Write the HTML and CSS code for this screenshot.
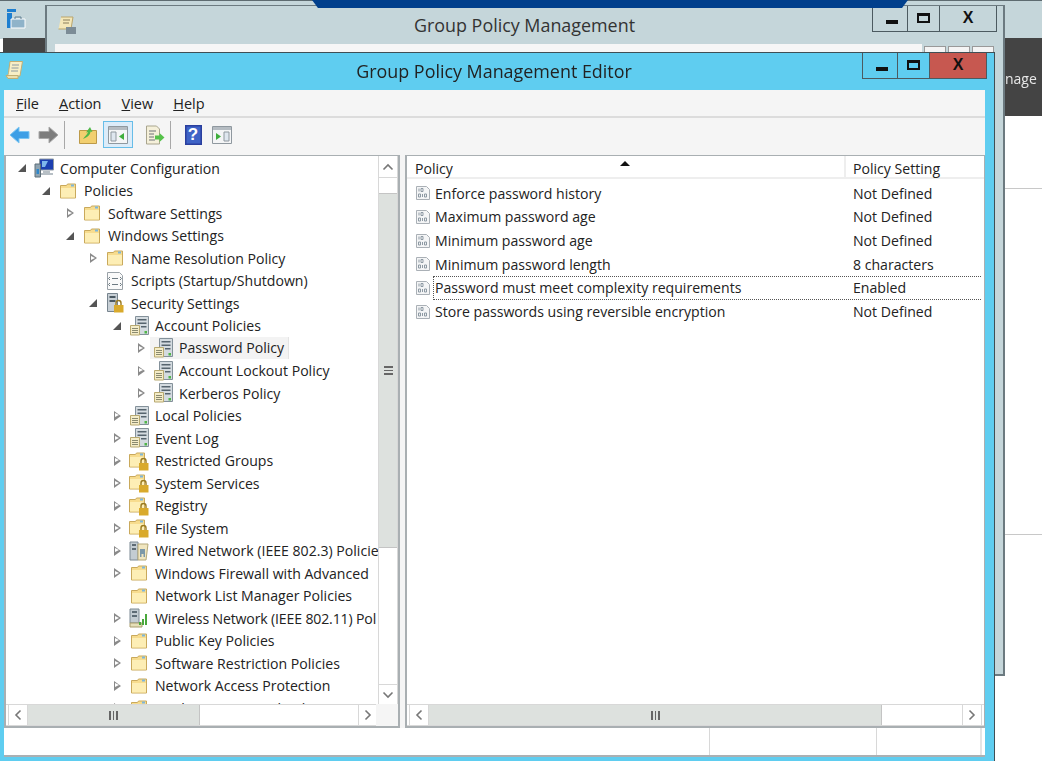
FILE: index.html

```html
<!DOCTYPE html>
<html lang="en">
<head>
    <meta charset="UTF-8">
    <title>Group Policy Management Editor</title>
    <link rel="stylesheet" href="styles.css">
</head>
<body>

<svg class="defs" width="0" height="0">
    <defs>
        <symbol id="i-folder" viewBox="0 0 20 20">
            <path d="M2.500 4.500h6l1-1.500h8v14h-15z" fill="#f7dc8e" stroke="#c9a95c"/>
            <path d="M3 7h14v9.500H3z" fill="#fdeeb5"/>
            <path d="M13 3.500h3v2h-3z" fill="#7cb6dc"/>
        </symbol>
        <symbol id="i-lockfolder" viewBox="0 0 20 20">
            <path d="M.5 3.500h6l1-1.500h8v14H.5z" fill="#f7dc8e" stroke="#c9a95c"/>
            <path d="M1 6h14v9.500H1z" fill="#fdeeb5"/>
            <path d="M11 2.500h3v2h-3z" fill="#7cb6dc"/>
            <path d="M12 12v-2a2.500 2.500 0 0 1 5 0v2" fill="none" stroke="#9a7a20" stroke-width="1.400"/>
            <path d="M10 12h9.500v7.500H10z" fill="#d9aa2c"/>
        </symbol>
        <symbol id="i-policy" viewBox="0 0 20 20">
            <path d="M6.500.5h13v18h-13z" fill="#d4dbe0" stroke="#84919a"/>
            <path d="M8.500 3h9v1.500h-9zM8.500 6.500h9V8h-9zM12 10h5.500v1.500H12z" fill="#56646e"/>
            <path d="M15.500 15h2.500v2.500h-2.500z" fill="#4fb548"/>
            <path d="M1.500 9.500h9v9.500h-9z" fill="#f4ecc7" stroke="#b8a970"/>
            <path d="M3 12.500h6M3 14.500h6M3 16.500h6" stroke="#8a8a70"/>
        </symbol>
        <symbol id="i-seclock" viewBox="0 0 20 20">
            <path d="M2.500.5h10v18h-10z" fill="#c8d0d6" stroke="#77848e"/>
            <path d="M4.500 3h6v2h-6zM4.500 7h6v2h-6z" fill="#4a5862"/>
            <path d="M11 12v-2a2.500 2.500 0 0 1 5 0v2" fill="none" stroke="#9a7a20" stroke-width="1.400"/>
            <path d="M9 12h9.500v7.500H9z" fill="#d9aa2c"/>
        </symbol>
        <symbol id="i-script" viewBox="0 0 20 20">
            <path d="M2.500 1.500h12l3 3v14h-15z" fill="#fafafa" stroke="#9aa2a8"/>
            <path d="M5 6L3.500 7.500 5 9M15 6l1.500 1.500L15 9M5 12l-1.500 1.500L5 15M15 12l1.500 1.500L15 15M7 7.500h6M7 13.500h6" fill="none" stroke="#6d7a82"/>
        </symbol>
        <symbol id="i-computer" viewBox="0 0 20 20">
            <path d="M5.500 1h14v11h-14z" fill="#1c3fb0" stroke="#8f9aa3"/>
            <path d="M8 3h6l-3 6H8z" fill="#7eb6ec"/>
            <path d="M9 13h7v2h3v2H7v-2h2z" fill="#b7bfc5"/>
            <path d="M1 6h5.500v13H1z" fill="#8fa3b0" stroke="#5f6e78"/>
            <path d="M2.500 11h2.500v5H2.500z" fill="#2e86c9"/>
        </symbol>
        <symbol id="i-wired" viewBox="0 0 20 20">
            <path d="M1 1h8v18H1z" fill="#c3ccd2" stroke="#7c8a94"/>
            <path d="M3 3h4v2H3zM3 7h4v2H3z" fill="#5d6b75"/>
            <path d="M9 3h10l-2 16H9z" fill="#f0e6c0" stroke="#b5a878"/>
            <path d="M11 8h5v8h-1.500v-3h-2v3H11z" fill="#7c98a8"/>
        </symbol>
        <symbol id="i-wireless" viewBox="0 0 20 20">
            <path d="M1 1h9v14H1z" fill="#c3ccd2" stroke="#7c8a94"/>
            <path d="M3 3h5v2H3zM3 7h5v2H3z" fill="#5d6b75"/>
            <path d="M1 15h12v4H1z" fill="#e6dfb8" stroke="#a89c6c"/>
            <path d="M10 17v-3h2v3zM13 17v-6h2v6zM16 17V6h2v11z" fill="#4aa83c"/>
        </symbol>
        <symbol id="i-setting" viewBox="0 0 16 16">
            <path d="M1.500 1.500h10l3 3v10h-13z" fill="#f4f5f6" stroke="#aab0b6"/>
            <path d="M4 3.500v3M6 3.500h2v3H6zM3.500 9h2v3h-2zM7.500 9v3M9.500 9h2v3h-2z" fill="none" stroke="#8d99a3"/>
        </symbol>
    </defs>
</svg>

<!-- windows behind the editor -->
<div class="server-manager">
    <div class="sm-dark"></div>
    <div class="sm-band"><span class="sm-text">nage</span></div>
    <div class="sm-line sm-line-1"></div>
    <div class="sm-line sm-line-2"></div>
    <svg class="sm-icon" width="20" height="22" viewBox="0 0 20 22">
        <path d="M1 1h9v3H1z" fill="#1e7fd0"/>
        <path d="M1 5h5v15H1z" fill="#1e7fd0"/>
        <path d="M5 11h14v9H5z" fill="#8fb3c9" stroke="#fff"/>
        <path d="M9 11V9h6v2" fill="none" stroke="#5f7f92"/>
    </svg>
    <div class="top-strip"></div>
</div>

<div class="gpm-window">
    <svg class="gpm-icon" width="20" height="20" viewBox="0 0 20 20">
        <path d="M4 2h12l-2 12H1.500" fill="#f4e7b8" stroke="#b9a56c"/>
        <path d="M6 5h7M6 8h6" stroke="#8a7f5c"/>
        <path d="M9 12h10v7H9z" fill="#7c8c96"/>
    </svg>
    <div class="gpm-title">Group Policy Management</div>
    <div class="caption-buttons gpm-buttons">
        <div class="cap-btn cap-min"><span class="glyph-min"></span></div>
        <div class="cap-btn cap-max"><span class="glyph-max"></span></div>
        <div class="cap-btn cap-close"><span class="glyph-x">X</span></div>
    </div>
    <div class="gpm-child">
        <div class="gpm-child-btns"><span></span><span></span><span></span></div>
    </div>
</div>

<!-- front window -->
<div class="editor">
    <div class="titlebar">
        <svg class="title-icon" width="20" height="20" viewBox="0 0 20 20">
            <path d="M5 1.500h12.500l-2.500 14.500H1.500c1.500-1 2-2 2-3.500z" fill="#f7eec6" stroke="#c2ae72"/>
            <path d="M7 5h7M6.500 8h7M6 11h7" stroke="#8e9aa0"/>
            <path d="M1 15.500h12v3H3z" fill="#eadfae" stroke="#c2ae72"/>
        </svg>
        <div class="title-text">Group Policy Management Editor</div>
        <div class="caption-buttons">
            <div class="cap-btn cap-min"><span class="glyph-min"></span></div>
            <div class="cap-btn cap-max"><span class="glyph-max"></span></div>
            <div class="cap-btn cap-close active"><span class="glyph-x">X</span></div>
        </div>
    </div>

    <div class="client">
        <div class="menubar">
            <span class="menu-item"><u>F</u>ile</span>
            <span class="menu-item"><u>A</u>ction</span>
            <span class="menu-item"><u>V</u>iew</span>
            <span class="menu-item"><u>H</u>elp</span>
        </div>

        <div class="toolbar">
            <button class="tool">
                <svg width="22" height="20" viewBox="0 0 22 20"><path d="M1 10l9-8v4.500h10v7H10V18z" fill="#3d9fe6" stroke="#7cc6f2"/></svg>
            </button>
            <button class="tool">
                <svg width="22" height="20" viewBox="0 0 22 20"><path d="M21 10l-9-8v4.500H2v7h10V18z" fill="#7d7d7d" stroke="#a8a8a8"/></svg>
            </button>
            <span class="tool-sep"></span>
            <button class="tool tool-wide">
                <svg width="20" height="20" viewBox="0 0 20 20">
                    <path d="M1.500 5.500h17v13h-17z" fill="#f2cf70" stroke="#bd9a48"/>
                    <path d="M5 14c2-3 4-4 5-7l-2 .5L12 2l2.500 5-2-.5c0 3-3 6-7.500 7.500z" fill="#4fb848"/>
                </svg>
            </button>
            <button class="tool tool-on">
                <svg width="20" height="18" viewBox="0 0 20 18">
                    <path d="M.5.5h19v17H.5z" fill="#f4f5f6" stroke="#8f989f"/>
                    <path d="M1 1h18v3H1z" fill="#b5bcc2"/>
                    <path d="M3 6h5v9H3z" fill="#dfe7ef" stroke="#8f989f"/>
                    <path d="M16 7v7l-5-3.500z" fill="#3fae3c"/>
                </svg>
            </button>
            <button class="tool tool-wide2">
                <svg width="20" height="20" viewBox="0 0 20 20">
                    <path d="M1.500 1h10l3 3v15h-13z" fill="#f5f0da" stroke="#a9a58e"/>
                    <path d="M4 6h7M4 9h5M4 12h5M4 15h6" stroke="#6f7378"/>
                    <path d="M19.500 12.500l-5-4.500v2.500H10v4h4.500V17z" fill="#56c24a"/>
                </svg>
            </button>
            <span class="tool-sep sep-b"></span>
            <button class="tool tool-help">
                <svg class="help-svg" width="17" height="20" viewBox="0 0 17 20">
                    <path d="M0 0h17v20H0z" fill="#2a3f9e"/>
                    <path d="M1.500 1.500h14v17h-14z" fill="#3e63c6"/>
                </svg>
                <span class="help-mark">?</span>
            </button>
            <button class="tool tool-last">
                <svg width="20" height="18" viewBox="0 0 20 18">
                    <path d="M.5.5h19v17H.5z" fill="#f4f5f6" stroke="#8f989f"/>
                    <path d="M1 1h18v3H1z" fill="#b5bcc2"/>
                    <path d="M12 6h5v9h-5z" fill="#dfe7ef" stroke="#8f989f"/>
                    <path d="M4 7v7l5-3.500z" fill="#3fae3c"/>
                </svg>
            </button>
        </div>

        <div class="panes">
            <div class="tree-pane">
                <div class="tree-main">
                    <div class="tree">
                        <div class="node lvl-0"><span class="tw open"></span><svg class="ico"><use href="#i-computer"/></svg><span class="label">Computer Configuration</span></div>
                        <div class="node lvl-1"><span class="tw open"></span><svg class="ico"><use href="#i-folder"/></svg><span class="label">Policies</span></div>
                        <div class="node lvl-2"><span class="tw"></span><svg class="ico"><use href="#i-folder"/></svg><span class="label">Software Settings</span></div>
                        <div class="node lvl-2"><span class="tw open"></span><svg class="ico"><use href="#i-folder"/></svg><span class="label">Windows Settings</span></div>
                        <div class="node lvl-3"><span class="tw"></span><svg class="ico"><use href="#i-folder"/></svg><span class="label">Name Resolution Policy</span></div>
                        <div class="node lvl-3"><span class="tw none"></span><svg class="ico"><use href="#i-script"/></svg><span class="label">Scripts (Startup/Shutdown)</span></div>
                        <div class="node lvl-3"><span class="tw open"></span><svg class="ico"><use href="#i-seclock"/></svg><span class="label">Security Settings</span></div>
                        <div class="node lvl-4"><span class="tw open"></span><svg class="ico"><use href="#i-policy"/></svg><span class="label">Account Policies</span></div>
                        <div class="node lvl-5 selected"><span class="tw"></span><svg class="ico"><use href="#i-policy"/></svg><span class="label">Password Policy</span></div>
                        <div class="node lvl-5"><span class="tw"></span><svg class="ico"><use href="#i-policy"/></svg><span class="label">Account Lockout Policy</span></div>
                        <div class="node lvl-5"><span class="tw"></span><svg class="ico"><use href="#i-policy"/></svg><span class="label">Kerberos Policy</span></div>
                        <div class="node lvl-4"><span class="tw"></span><svg class="ico"><use href="#i-policy"/></svg><span class="label">Local Policies</span></div>
                        <div class="node lvl-4"><span class="tw"></span><svg class="ico"><use href="#i-policy"/></svg><span class="label">Event Log</span></div>
                        <div class="node lvl-4"><span class="tw"></span><svg class="ico"><use href="#i-lockfolder"/></svg><span class="label">Restricted Groups</span></div>
                        <div class="node lvl-4"><span class="tw"></span><svg class="ico"><use href="#i-lockfolder"/></svg><span class="label">System Services</span></div>
                        <div class="node lvl-4"><span class="tw"></span><svg class="ico"><use href="#i-lockfolder"/></svg><span class="label">Registry</span></div>
                        <div class="node lvl-4"><span class="tw"></span><svg class="ico"><use href="#i-lockfolder"/></svg><span class="label">File System</span></div>
                        <div class="node lvl-4"><span class="tw"></span><svg class="ico"><use href="#i-wired"/></svg><span class="label">Wired Network (IEEE 802.3) Policie</span></div>
                        <div class="node lvl-4"><span class="tw"></span><svg class="ico"><use href="#i-folder"/></svg><span class="label">Windows Firewall with Advanced</span></div>
                        <div class="node lvl-4"><span class="tw none"></span><svg class="ico"><use href="#i-folder"/></svg><span class="label">Network List Manager Policies</span></div>
                        <div class="node lvl-4"><span class="tw"></span><svg class="ico"><use href="#i-wireless"/></svg><span class="label tight">Wireless Network (IEEE 802.11) Pol</span></div>
                        <div class="node lvl-4"><span class="tw"></span><svg class="ico"><use href="#i-folder"/></svg><span class="label">Public Key Policies</span></div>
                        <div class="node lvl-4"><span class="tw"></span><svg class="ico"><use href="#i-folder"/></svg><span class="label">Software Restriction Policies</span></div>
                        <div class="node lvl-4"><span class="tw"></span><svg class="ico"><use href="#i-folder"/></svg><span class="label">Network Access Protection</span></div>
                        <div class="node lvl-4"><span class="tw"></span><svg class="ico"><use href="#i-folder"/></svg><span class="label">Application Control Policies</span></div>
                    </div>
                    <div class="vscroll">
                        <div class="sb-btn">
                            <svg width="12" height="8" viewBox="0 0 12 8"><path d="M1.500 6.500L6 2l4.500 4.500" fill="none" stroke="#777" stroke-width="1.600"/></svg>
                        </div>
                        <div class="v-gap"></div>
                        <div class="v-thumb"><span class="grip-h"></span></div>
                        <div class="v-rest"></div>
                        <div class="sb-btn">
                            <svg width="12" height="8" viewBox="0 0 12 8"><path d="M1.500 1.500L6 6l4.500-4.500" fill="none" stroke="#777" stroke-width="1.600"/></svg>
                        </div>
                    </div>
                </div>
                <div class="hscroll hscroll-tree">
                    <div class="sb-btn-h">
                        <svg width="8" height="12" viewBox="0 0 8 12"><path d="M6.500 1.500L2 6l4.500 4.500" fill="none" stroke="#777" stroke-width="1.600"/></svg>
                    </div>
                    <div class="h-thumb tree-thumb"><span class="grip-v"></span></div>
                    <div class="h-rest"></div>
                    <div class="sb-btn-h">
                        <svg width="8" height="12" viewBox="0 0 8 12"><path d="M1.500 1.500L6 6l-4.500 4.500" fill="none" stroke="#777" stroke-width="1.600"/></svg>
                    </div>
                    <div class="corner"></div>
                </div>
            </div>

            <div class="list-pane">
                <div class="list-head">
                    <div class="col-policy">Policy<span class="sort-arrow"></span></div>
                    <div class="col-setting">Policy Setting</div>
                </div>
                <div class="list-body">
                    <div class="row"><svg class="row-ico"><use href="#i-setting"/></svg><span class="row-name">Enforce password history</span><span class="row-val">Not Defined</span></div>
                    <div class="row"><svg class="row-ico"><use href="#i-setting"/></svg><span class="row-name">Maximum password age</span><span class="row-val">Not Defined</span></div>
                    <div class="row"><svg class="row-ico"><use href="#i-setting"/></svg><span class="row-name">Minimum password age</span><span class="row-val">Not Defined</span></div>
                    <div class="row"><svg class="row-ico"><use href="#i-setting"/></svg><span class="row-name">Minimum password length</span><span class="row-val">8 characters</span></div>
                    <div class="row focused"><svg class="row-ico"><use href="#i-setting"/></svg><span class="row-name">Password must meet complexity requirements</span><span class="row-val">Enabled</span></div>
                    <div class="row"><svg class="row-ico"><use href="#i-setting"/></svg><span class="row-name">Store passwords using reversible encryption</span><span class="row-val">Not Defined</span></div>
                </div>
                <div class="hscroll hscroll-list">
                    <div class="sb-btn-h">
                        <svg width="8" height="12" viewBox="0 0 8 12"><path d="M6.500 1.500L2 6l4.500 4.500" fill="none" stroke="#777" stroke-width="1.600"/></svg>
                    </div>
                    <div class="h-thumb list-thumb"><span class="grip-v"></span></div>
                    <div class="h-rest"></div>
                    <div class="sb-btn-h">
                        <svg width="8" height="12" viewBox="0 0 8 12"><path d="M1.500 1.500L6 6l-4.500 4.500" fill="none" stroke="#777" stroke-width="1.600"/></svg>
                    </div>
                </div>
            </div>
        </div>

        <div class="statusbar">
            <div class="status-main"></div>
            <div class="status-cell status-a"></div>
            <div class="status-cell status-b"></div>
        </div>
    </div>
</div>

</body>
</html>
```

FILE: styles.css

```css
* {
    box-sizing: border-box;
}
html, body {
    margin: 0;
    height: 100%;
}
body {
    position: relative;
    width: 1042px;
    height: 761px;
    overflow: hidden;
    background-color: #fff;
    font-family: "Open Sans", "Noto Sans", sans-serif;
    font-size: 14px;
    color: #222;
    filter: blur(0.35px);
}
.defs {
    position: absolute;
}

/* desktop behind */
.server-manager {
    position: absolute;
    inset: 0;
}
.server-manager::before {
    content: "";
    position: absolute;
    left: 0;
    top: 0;
    width: 1042px;
    height: 38px;
    background-color: #c5d6da;
    border-top: 1px solid #5e6b70;
}
.sm-dark {
    position: absolute;
    left: 3px;
    top: 38px;
    width: 42px;
    height: 14px;
    background-color: #444;
}
.sm-band {
    position: absolute;
    left: 1004px;
    top: 38px;
    width: 38px;
    height: 78px;
    background-color: #444;
}
.sm-text {
    position: absolute;
    left: 1px;
    top: 31px;
    color: #e8e8e8;
    font-size: 14px;
}
.sm-line {
    position: absolute;
    left: 1004px;
    width: 38px;
    height: 1px;
    background-color: #c8c8c8;
}
.sm-line-1 {
    top: 188px;
}
.sm-line-2 {
    top: 534px;
}
.sm-icon {
    position: absolute;
    left: 6px;
    top: 8px;
}
.top-strip {
    position: absolute;
    z-index: 1;
    left: 312px;
    top: 0;
    width: 596px;
    height: 8px;
    background-color: #003f8c;
    clip-path: polygon(0 0, 100% 0, 99% 100%, 1% 100%);
}

.gpm-window {
    position: absolute;
    left: 45px;
    top: 5px;
    width: 960px;
    height: 671px;
    background-color: #c5d6da;
    border: 1px solid #6c7a80;
    border-width: 1px 2px 2px 2px;
}
.gpm-icon {
    position: absolute;
    left: 10px;
    top: 9px;
}
.gpm-title {
    text-align: center;
    margin-left: -1px;
    padding-top: 7px;
    font-size: 17.900px;
    color: #333;
    line-height: 24px;
}
.gpm-buttons {
    top: 0;
    right: 6px;
}
.gpm-child {
    position: absolute;
    left: 8px;
    top: 38px;
    width: 867px;
    height: 10px;
    background-color: #f6f6f6;
}
.gpm-child-btns {
    position: absolute;
    left: 869px;
    top: 2px;
    display: flex;
    gap: 2px;
}
.gpm-child-btns span {
    width: 22px;
    height: 8px;
    background-color: #f4f4f4;
    border: 1px solid #999;
    border-bottom: none;
}

/* caption buttons shared by both windows */
.caption-buttons {
    position: absolute;
    display: flex;
    height: 26px;
    border: 1px solid #4c5a60;
    border-top: none;
}
.cap-btn {
    display: flex;
    align-items: center;
    justify-content: center;
    height: 100%;
    border-right: 1px solid #4c5a60;
}
.cap-btn:last-child {
    border-right: none;
}
.cap-min {
    width: 35px;
}
.cap-max {
    width: 32px;
}
.cap-close {
    width: 56px;
}
.cap-close.active {
    background-color: #c75850;
}
.glyph-min {
    width: 12px;
    height: 4px;
    margin: 6px 0 0 4px;
    background-color: #111;
}
.glyph-max {
    width: 13px;
    height: 10px;
    border: 2px solid #111;
    border-top-width: 3px;
    margin-bottom: 2px;
}
.glyph-x {
    font-family: "Liberation Sans", sans-serif;
    font-weight: bold;
    font-size: 16px;
    color: #111;
    line-height: 1;
    margin-bottom: 2px;
}

/* editor window */
.editor {
    position: absolute;
    left: 0;
    top: 52px;
    width: 995px;
    height: 709px;
    display: flex;
    flex-direction: column;
    background-color: #5fcdf0;
    border-top: 1px solid #3f4f55;
    border-right: 1px solid #3f4f55;
}
.titlebar {
    position: relative;
    height: 37px;
    flex-shrink: 0;
}
.title-icon {
    position: absolute;
    left: 5px;
    top: 7px;
}
.title-text {
    text-align: center;
    font-size: 17.900px;
    line-height: 24px;
    padding-top: 6px;
    color: #222;
    margin-left: -6px;
}
.titlebar .caption-buttons {
    top: 0;
    right: 7px;
}

.client {
    display: flex;
    flex-direction: column;
    margin: 0 9px 0 4px;
    height: 667px;
    background-color: #f5f5f5;
    border-bottom: 2px solid #aab0b3;
}
.menubar {
    display: flex;
    align-items: center;
    height: 28px;
    padding-left: 12px;
    gap: 20px;
    border-bottom: 2px solid #dcdcdc;
    flex-shrink: 0;
}
.menu-item {
    font-size: 14.500px;
    color: #222;
}
.toolbar {
    display: flex;
    align-items: center;
    height: 37px;
    padding: 0 0 4px 2px;
    flex-shrink: 0;
}
.tool {
    display: flex;
    align-items: center;
    justify-content: center;
    width: 28px;
    height: 27px;
    padding: 0;
    background: none;
    border: 1px solid transparent;
}
.tool-sep {
    width: 1px;
    height: 28px;
    margin: 0 4px 0 2px;
    background-color: #a8a8a8;
}
.tool-on {
    width: 30px;
    background-color: #dcecf9;
    border: 1px solid #67bde8;
}
.tool-wide {
    margin-left: 4px;
    width: 30px;
}
.tool-wide2 {
    margin-left: 8px;
}
.sep-b {
    margin-left: 1px;
}
.tool-help {
    position: relative;
    margin-left: 4px;
}
.tool-last {
    margin-left: 1px;
}
.help-mark {
    position: absolute;
    left: 0;
    right: 0;
    text-align: center;
    font-family: "Liberation Sans", sans-serif;
    font-weight: bold;
    font-size: 17px;
    color: #fff;
}

/* panes */
.panes {
    display: flex;
    flex: 1;
    min-height: 0;
    gap: 5px;
}
.tree-pane, .list-pane {
    display: flex;
    flex-direction: column;
    background-color: #fff;
    border: 1px solid #a9afb2;
    border-bottom-width: 2px;
    border-left-width: 2px;
}
.tree-pane {
    width: 396px;
    border-right-width: 2px;
}
.list-pane {
    flex: 1;
    min-width: 0;
}
.tree-main {
    display: flex;
    flex: 1;
    min-height: 0;
}
.tree {
    flex: 1;
    min-width: 0;
    overflow: hidden;
    padding-top: 1px;
}
.node {
    display: flex;
    align-items: center;
    height: 22.500px;
    white-space: nowrap;
}
.lvl-0 { padding-left: 11px; }
.lvl-1 { padding-left: 35px; }
.lvl-2 { padding-left: 59px; }
.lvl-3 { padding-left: 82px; }
.lvl-4 { padding-left: 106px; }
.lvl-5 { padding-left: 130px; }
.tw {
    width: 17px;
    height: 10px;
    flex-shrink: 0;
    position: relative;
}
.tw::before {
    content: "";
    position: absolute;
    left: 2px;
    top: 0;
    width: 0;
    height: 0;
    border-left: 7px solid #8a8a8a;
    border-top: 5px solid transparent;
    border-bottom: 5px solid transparent;
}
.tw::after {
    content: "";
    position: absolute;
    left: 3px;
    top: 2.500px;
    width: 0;
    height: 0;
    border-left: 4px solid #fff;
    border-top: 2.500px solid transparent;
    border-bottom: 2.500px solid transparent;
}
.tw.open::before {
    left: 1px;
    top: 1px;
    border-left: 8px solid transparent;
    border-top: none;
    border-bottom: 8px solid #555;
}
.tw.open::after {
    display: none;
}
.tw.none::before, .tw.none::after {
    display: none;
}
.ico {
    width: 20px;
    height: 20px;
    flex-shrink: 0;
}
.label {
    margin-left: 6px;
    font-size: 14.100px;
    color: #222;
}
.label.tight {
    letter-spacing: -0.15px;
}
.node.selected .ico {
    box-sizing: content-box;
    padding: 1px 0;
    background-color: #f3f3f3;
    box-shadow: -3px 0 0 #f3f3f3;
}
.node.selected .label {
    margin-left: 0;
    padding: 0 4px 0 6px;
    line-height: 22px;
    background-color: #f3f3f3;
    border-right: 1px solid #e4e4e4;
}

/* scrollbars */
.vscroll {
    display: flex;
    flex-direction: column;
    width: 20px;
    flex-shrink: 0;
    border-left: 1px solid #d8d8d8;
    border-right: 1px solid #d8d8d8;
}
.sb-btn {
    display: flex;
    align-items: center;
    justify-content: center;
    height: 22px;
    flex-shrink: 0;
    background-color: #fff;
    border-bottom: 1px solid #d8d8d8;
}
.vscroll .sb-btn:last-child {
    height: 20px;
    border-top: 1px solid #d8d8d8;
    border-bottom: none;
}
.v-gap {
    height: 15px;
    flex-shrink: 0;
}
.v-thumb {
    display: flex;
    align-items: center;
    justify-content: center;
    height: 355px;
    background-color: #dde1de;
    border-top: 1px solid #c4c4c4;
    border-bottom: 1px solid #c4c4c4;
}
.v-rest, .h-rest {
    flex: 1;
    background-color: #fff;
}
.grip-h {
    width: 9px;
    height: 9px;
    border-top: 2px solid #666;
    border-bottom: 2px solid #666;
    background: linear-gradient(#666, #666) center / 100% 1px no-repeat;
}
.hscroll {
    display: flex;
    height: 22px;
    flex-shrink: 0;
    padding: 0 2px;
    border-top: 1px solid #d8d8d8;
    border-bottom: 1px solid #d8d8d8;
    background-color: #fff;
}
.sb-btn-h {
    display: flex;
    align-items: center;
    justify-content: center;
    width: 20px;
    flex-shrink: 0;
    border: 1px solid #d8d8d8;
    border-width: 0 1px;
}
.h-thumb {
    display: flex;
    align-items: center;
    justify-content: center;
    background-color: #dde1de;
    border-right: 1px solid #c4c4c4;
}
.tree-thumb {
    width: 172px;
}
.list-thumb {
    width: 453px;
}
.grip-v {
    width: 9px;
    height: 9px;
    border-left: 2px solid #666;
    border-right: 2px solid #666;
    background: linear-gradient(#666, #666) center / 1px 100% no-repeat;
}
.corner {
    width: 22px;
    flex-shrink: 0;
    margin: -1px -2px;
    background-color: #f5f5f5;
}

/* policy list */
.list-head {
    display: flex;
    height: 23px;
    flex-shrink: 0;
    line-height: 25px;
    font-size: 14.100px;
    border-bottom: 2px solid #eee;
}
.col-policy {
    position: relative;
    width: 439px;
    padding-left: 8px;
    border-right: 2px solid #eee;
}
.sort-arrow {
    position: absolute;
    left: 213px;
    top: 5px;
    width: 0;
    height: 0;
    border-left: 5px solid transparent;
    border-right: 5px solid transparent;
    border-bottom: 5px solid #111;
}
.col-setting {
    padding-left: 7px;
}
.list-body {
    flex: 1;
    min-height: 0;
    padding-top: 2.400px;
}
.row {
    display: flex;
    align-items: center;
    height: 23.700px;
    padding-left: 8px;
    font-size: 14.100px;
    white-space: nowrap;
}
.row-ico {
    width: 16px;
    height: 16px;
    flex-shrink: 0;
}
.row-name {
    width: 422px;
    padding-left: 4px;
}
.row.focused .row-name {
    align-self: stretch;
    line-height: 22px;
    width: 548px;
    margin: 0 -128px 0 2px;
    padding-left: 1px;
    border: 1px dotted #555;
    border-width: 1px 0 1px 1px;
}
.row.focused .row-val {
    position: relative;
}

.statusbar {
    display: flex;
    height: 27px;
    flex-shrink: 0;
    background-color: #fff;
}
.status-main {
    flex: 1;
}
.status-cell {
    border-left: 1px solid #d8d8d8;
}
.status-a {
    width: 167px;
}
.status-b {
    width: 106px;
    margin-right: 3px;
    border-right: 2px solid #e4e4e4;
}
```
